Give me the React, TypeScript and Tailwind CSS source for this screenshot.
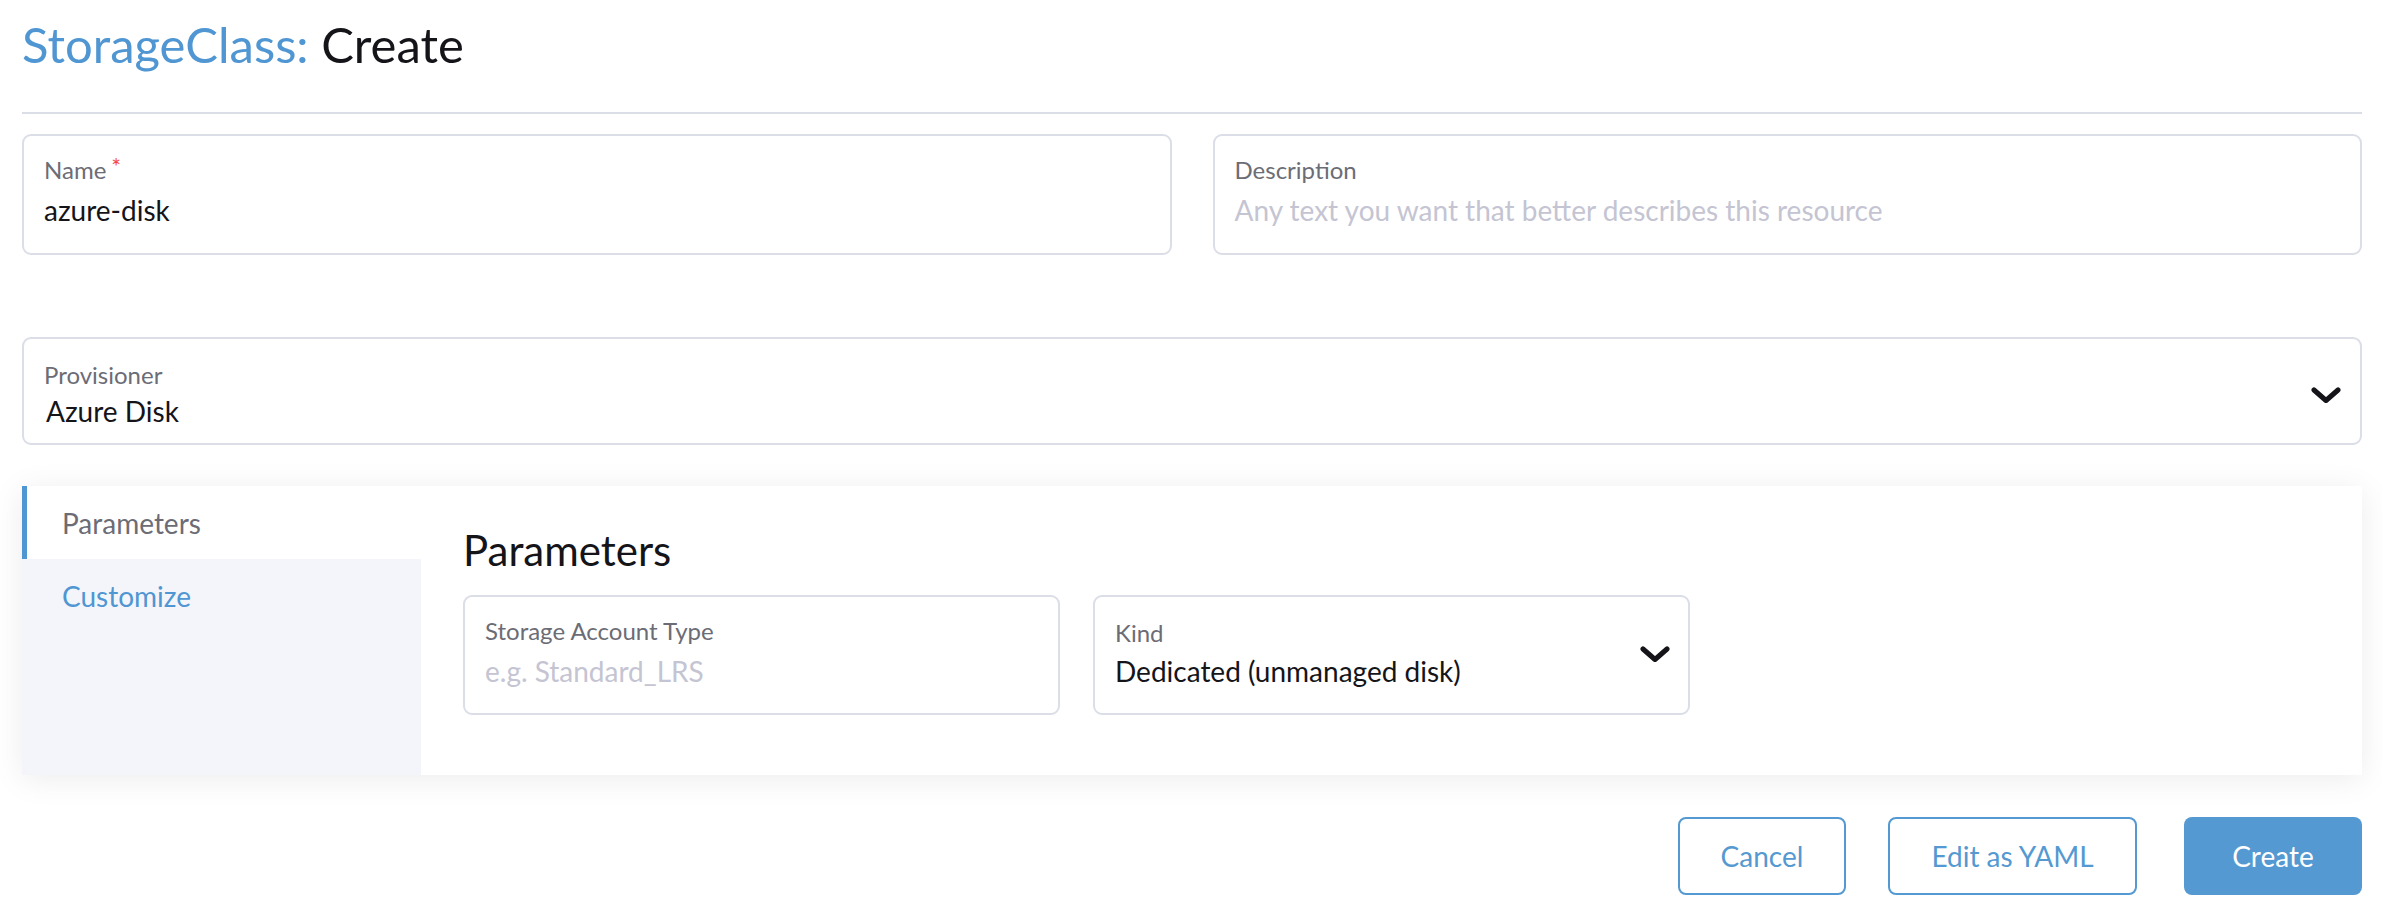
import React from "react";

const Chevron = () => (
  <svg width="30" height="17" viewBox="0 0 30 17" fill="none">
    <polyline
      points="3,3 15,13.5 27,3"
      stroke="#141419"
      strokeWidth="5"
      strokeLinecap="round"
      strokeLinejoin="round"
    />
  </svg>
);

export default function App() {
  return (
    <div className="w-full min-h-[922px] bg-white pl-[22px] pr-[20px] font-['Lato',sans-serif] text-[#141419]">
      <h1 className="pt-[15px] text-[49px] leading-[59px] font-normal">
        <span className="text-[#4f96d2]">StorageClass:</span> <span>Create</span>
      </h1>
      <div className="mt-[38px] h-[2px] bg-[#dcdee7]" />

      <div className="mt-[20px] grid grid-cols-2 gap-[41px]">
        <div className="h-[121px] rounded-[9px] border-2 border-[#dcdee7] px-[20px] pt-[19px]">
          <div className="text-[24px] leading-[29px] text-[#6c6c76]">
            Name<span className="ml-[5px] align-top text-[23px] leading-[22px] text-[#f64747]">*</span>
          </div>
          <div className="mt-[9px] text-[28px] leading-[34px]">azure-disk</div>
        </div>
        <div className="h-[121px] rounded-[9px] border-2 border-[#dcdee7] px-[20px] pt-[19px]">
          <div className="text-[24px] leading-[29px] text-[#6c6c76]">Description</div>
          <div className="mt-[9px] text-[28px] leading-[34px] text-[#c4c4d2]">
            Any text you want that better describes this resource
          </div>
        </div>
      </div>

      <div className="mt-[82px] flex h-[108px] items-center rounded-[9px] border-2 border-[#dcdee7] pl-[20px] pr-[19px]">
        <div className="flex-1 self-start pt-[21px]">
          <div className="text-[24px] leading-[29px] text-[#6c6c76]">Provisioner</div>
          <div className="mt-[5px] pl-[2px] text-[28px] leading-[34px]">Azure Disk</div>
        </div>
        <div className="mt-[8px]">
          <Chevron />
        </div>
      </div>

      <div className="mt-[41px] flex shadow-[0_4px_30px_rgba(0,0,0,0.08)]">
        <div className="w-[399px] bg-[#f4f5fa]">
          <div className="flex h-[73px] items-center border-l-[5px] border-[#4f96d2] bg-white pl-[35px] text-[28px] leading-[34px] text-[#6c6c76]">
            Parameters
          </div>
          <div className="flex h-[73px] items-center pl-[40px] text-[28px] leading-[34px] text-[#4f96d2]">
            Customize
          </div>
        </div>
        <div className="flex-1 bg-white px-[42px] pt-[40px] pb-[60px]">
          <h3 className="text-[42px] leading-[49px] font-normal">Parameters</h3>
          <div className="mt-[20px] grid grid-cols-3 gap-[33px]">
            <div className="h-[120px] rounded-[9px] border-2 border-[#dcdee7] px-[20px] pt-[19px]">
              <div className="text-[24px] leading-[29px] text-[#6c6c76]">Storage Account Type</div>
              <div className="mt-[9px] text-[28px] leading-[34px] text-[#c4c4d2]">e.g. Standard_LRS</div>
            </div>
            <div className="flex h-[120px] items-center rounded-[9px] border-2 border-[#dcdee7] pl-[20px] pr-[18px]">
              <div className="flex-1 self-start pt-[21px]">
                <div className="text-[24px] leading-[29px] text-[#6c6c76]">Kind</div>
                <div className="mt-[7px] text-[28px] leading-[34px]">Dedicated (unmanaged disk)</div>
              </div>
              <div className="-mt-[2px]">
                <Chevron />
              </div>
            </div>
          </div>
        </div>
      </div>

      <div className="mt-[42px] flex justify-end">
        <button className="h-[78px] w-[168px] rounded-[8px] border-2 border-[#5499d1] bg-white text-[28px] text-[#5499d1]">
          Cancel
        </button>
        <button className="ml-[42px] h-[78px] w-[249px] rounded-[8px] border-2 border-[#5499d1] bg-white text-[28px] text-[#5499d1]">
          Edit as YAML
        </button>
        <button className="ml-[47px] h-[78px] w-[178px] rounded-[8px] bg-[#5499d1] text-[28px] text-white">
          Create
        </button>
      </div>
    </div>
  );
}
